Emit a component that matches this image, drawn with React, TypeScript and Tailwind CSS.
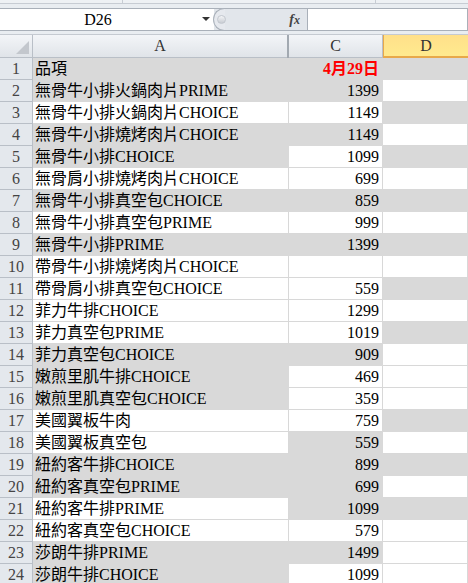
import React from "react";

type Row = [number, string, string, boolean, boolean, boolean];

const G = true;
const W = false;

const rows: Row[] = [
  [1, "品項", "4月29日", G, G, G],
  [2, "無骨牛小排火鍋肉片PRIME", "1399", G, G, W],
  [3, "無骨牛小排火鍋肉片CHOICE", "1149", W, W, G],
  [4, "無骨牛小排燒烤肉片CHOICE", "1149", G, G, W],
  [5, "無骨牛小排CHOICE", "1099", G, W, G],
  [6, "無骨肩小排燒烤肉片CHOICE", "699", W, W, W],
  [7, "無骨牛小排真空包CHOICE", "859", G, G, G],
  [8, "無骨牛小排真空包PRIME", "999", W, W, W],
  [9, "無骨牛小排PRIME", "1399", G, G, G],
  [10, "帶骨牛小排燒烤肉片CHOICE", "", W, W, W],
  [11, "帶骨肩小排真空包CHOICE", "559", W, W, G],
  [12, "菲力牛排CHOICE", "1299", W, W, W],
  [13, "菲力真空包PRIME", "1019", W, W, G],
  [14, "菲力真空包CHOICE", "909", G, G, W],
  [15, "嫩煎里肌牛排CHOICE", "469", G, W, W],
  [16, "嫩煎里肌真空包CHOICE", "359", G, W, W],
  [17, "美國翼板牛肉", "759", W, W, G],
  [18, "美國翼板真空包", "559", W, G, W],
  [19, "紐約客牛排CHOICE", "899", G, G, G],
  [20, "紐約客真空包PRIME", "699", G, G, W],
  [21, "紐約客牛排PRIME", "1099", W, G, G],
  [22, "紐約客真空包CHOICE", "579", W, W, W],
  [23, "莎朗牛排PRIME", "1499", G, G, W],
  [24, "莎朗牛排CHOICE", "1099", G, W, W],
];

const font = "font-['Liberation_Serif','Noto_Sans_CJK_TC',serif]";

function cellCls(gray: boolean) {
  return gray
    ? "bg-[#d9d9d9] border-r border-b border-[#d9d9d9]"
    : "bg-white border-r border-b border-[#d8d8d8]";
}

export default function App() {
  return (
    <div className={`w-[468px] h-[583px] overflow-hidden bg-[#e9edf1] ${font} text-[16px] text-black`}>
      {/* top strip */}
      <div className="h-[4px] flex border-b border-[#c7ccd3] bg-[#eef1f4]">
        <div className="w-[123px] border-r border-[#c7ccd3]" />
        <div className="w-[253px] border-r border-[#c7ccd3]" />
        <div className="flex-1" />
      </div>
      {/* formula bar */}
      <div className="h-[4px]" />
      <div className="h-[23px] flex items-stretch">
        <div className="w-[214px] bg-white border-y border-[#a9b0b9] flex items-center relative">
          <div className="w-[196px] text-center leading-[20px]">D26</div>
          <div className="absolute left-[202px] top-[8px] w-0 h-0 border-l-[4px] border-r-[4px] border-t-[4px] border-l-transparent border-r-transparent border-t-[#333]" />
        </div>
        <div className="w-[93px] flex items-center bg-[#e2e6eb] border-y border-[#a9b0b9] relative">
          <div className="absolute left-[-1px] top-[-1px] w-[12px] h-[23px] rounded-l-full border border-r-0 border-[#aab1ba] bg-[#e6e9ee]" />
          <div className="absolute left-[3px] top-[6px] w-[9px] h-[9px] rounded-full bg-gradient-to-b from-[#f4f5f7] to-[#c8ccd2] border border-[#c2c7ce]" />
          <div className="ml-auto mr-[7px] italic font-bold text-[14px] text-[#444] font-['Liberation_Serif',serif] leading-none">
            f<span className="text-[12px]">x</span>
          </div>
        </div>
        <div className="flex-1 bg-white border border-[#a9b0b9]" />
      </div>
      <div className="h-[3px]" />
      {/* column header */}
      <div className="h-[24px] flex border-t border-[#c5cad1] bg-gradient-to-b from-[#f3f5f8] to-[#dfe3e8]">
        <div className="w-[33px] border-r border-b border-[#b9bfc7] relative">
          <div className="absolute right-[3px] bottom-[3px] w-0 h-0 border-l-[13px] border-b-[13px] border-l-transparent border-b-[#c3c7cd]" />
        </div>
        <div className="w-[254px] border-b border-[#b9bfc7] flex items-center justify-center text-[#333] leading-none">
          A
        </div>
        <div className="w-[2px] bg-[#a2a9b1]" />
        <div className="w-[94px] border-r border-b border-[#b9bfc7] flex items-center justify-center text-[#333] leading-none">
          C
        </div>
        <div className="flex-1 bg-gradient-to-b from-[#ffe08a] to-[#ffea8e] border-b-2 border-l border-[#e8a94a] flex items-center justify-center text-[#333] leading-none">
          D
        </div>
      </div>
      {/* grid */}
      <div className="flex flex-col">
        {rows.map(([n, a, c, ga, gc, gd]) => (
          <div key={n} className="flex h-[22px]">
            <div className="w-[33px] shrink-0 bg-[#e4e8ed] border-r border-b border-[#b9bfc7] flex items-end justify-center text-[#444] leading-[21px]">
              {n}
            </div>
            <div className={`w-[256px] shrink-0 pl-[2px] leading-[21px] whitespace-nowrap overflow-visible ${cellCls(ga)}`}>
              {a}
            </div>
            <div
              className={`w-[94px] shrink-0 pr-[3px] text-right leading-[21px] whitespace-nowrap ${cellCls(gc)} ${
                n === 1 ? "text-[#ff0000] font-bold" : ""
              }`}
            >
              {c}
            </div>
            <div className={`flex-1 ${cellCls(gd)}`} />
          </div>
        ))}
      </div>
    </div>
  );
}
